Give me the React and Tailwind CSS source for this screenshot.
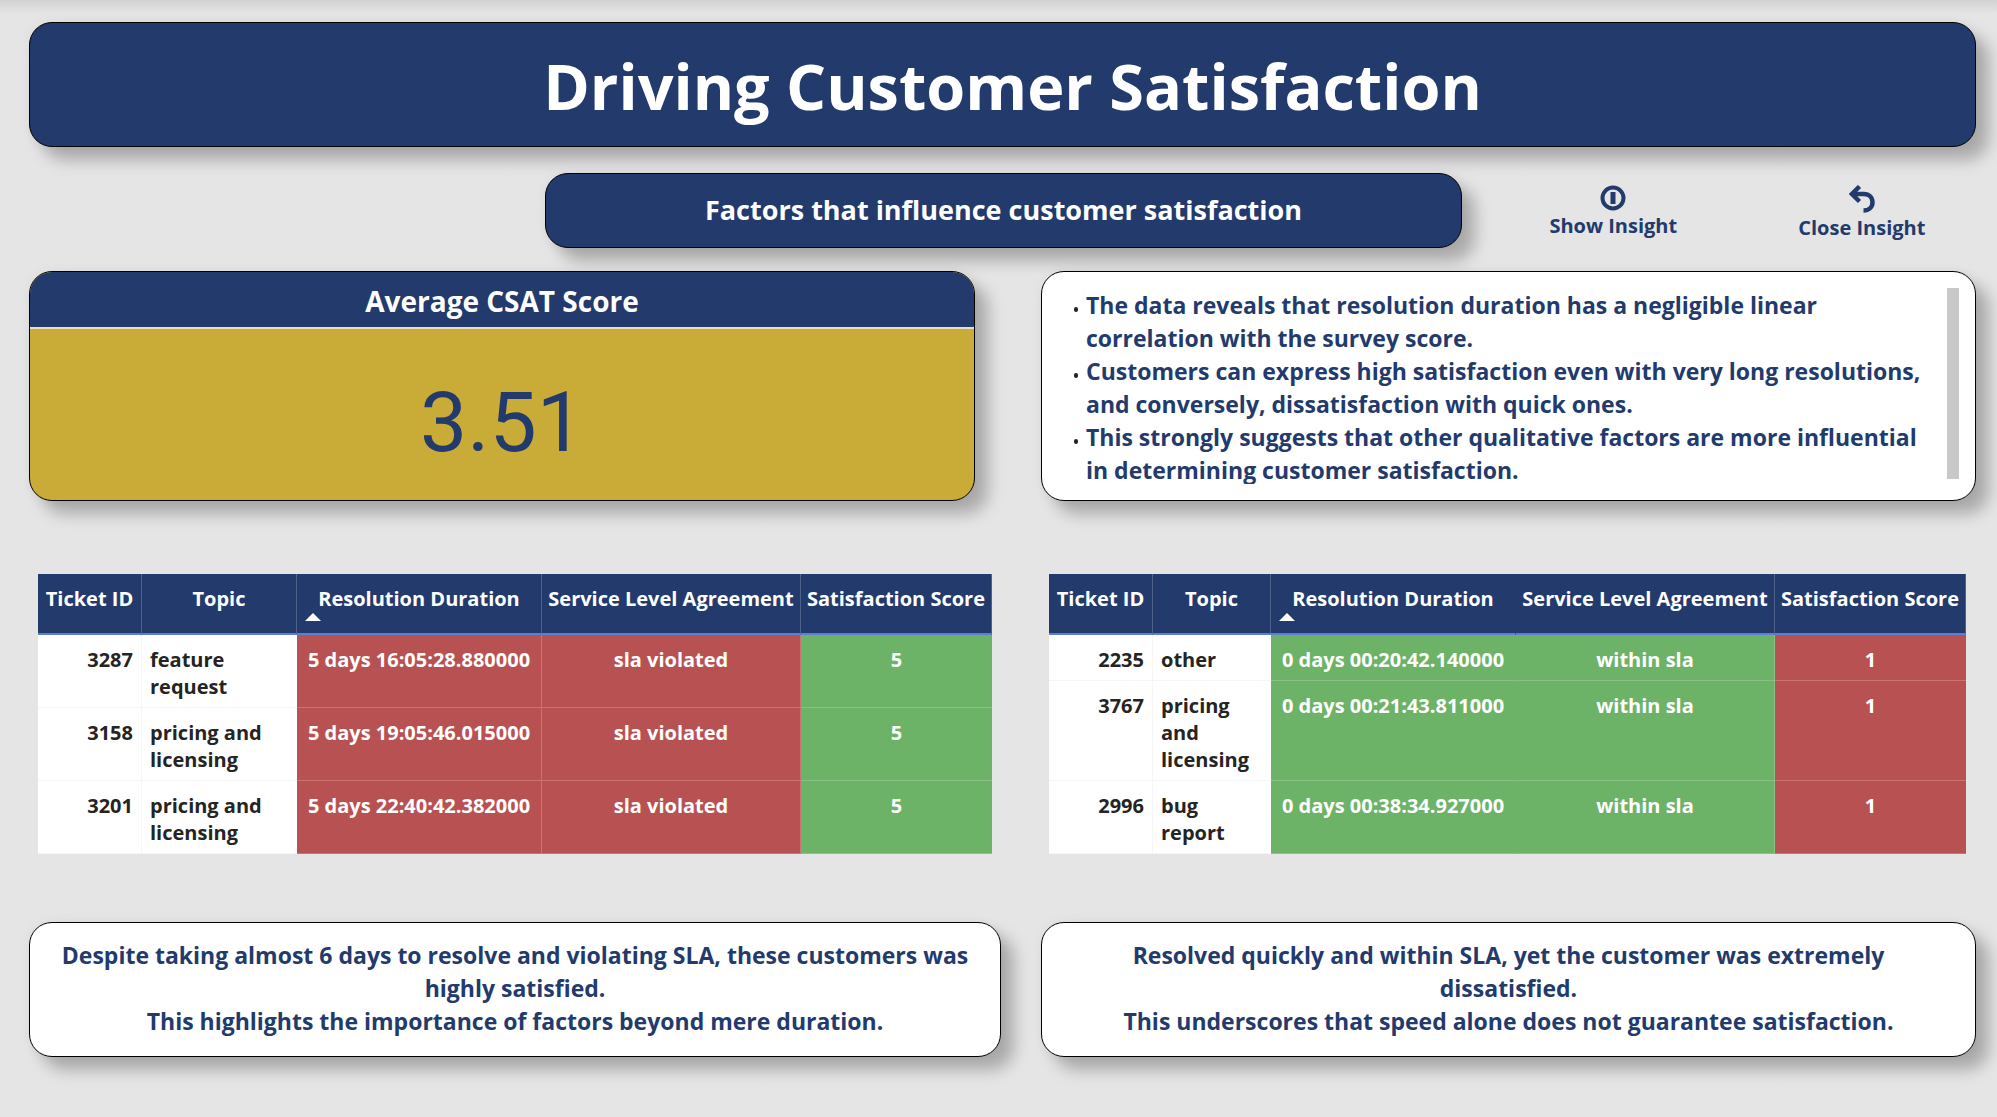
import React from "react";

const cardShadow = "shadow-[13px_13px_16px_0px_rgba(0,0,0,0.26),0_0_12px_0px_rgba(0,0,0,0.05)]";

const insights = [
  "The data reveals that resolution duration has a negligible linear correlation with the survey score.",
  "Customers can express high satisfaction even with very long resolutions, and conversely, dissatisfaction with quick ones.",
  "This strongly suggests that other qualitative factors are more influential in determining customer satisfaction.",
];

const violatedRows = [
  ["3287", "feature request", "5 days 16:05:28.880000", "sla violated", "5"],
  ["3158", "pricing and licensing", "5 days 19:05:46.015000", "sla violated", "5"],
  ["3201", "pricing and licensing", "5 days 22:40:42.382000", "sla violated", "5"],
];

const withinRows = [
  ["2235", "other", "0 days 00:20:42.140000", "within sla", "1"],
  ["3767", "pricing and licensing", "0 days 00:21:43.811000", "within sla", "1"],
  ["2996", "bug report", "0 days 00:38:34.927000", "within sla", "1"],
];

function TicketTable({ rows, topicWidth, slaColor, scoreColor, divider, label }) {
  const head = "border-r border-b-2 border-white/20 border-b-[#5b7fd6] px-1 pt-[11px] align-top font-bold whitespace-nowrap";
  const cell = "border-b px-2 pt-[11px] pb-[7px] align-top";
  return (
    <table aria-label={label} className="w-full table-fixed border-separate border-spacing-0 text-[20px] leading-[27px] font-bold">
      <colgroup>
        <col className="w-[104px]" />
        <col className={topicWidth} />
        <col className="w-[245px]" />
        <col className="w-[259px]" />
        <col />
      </colgroup>
      <thead>
        <tr className="h-[61px] bg-[#223a6c] text-white">
          <th scope="col" className={head}>Ticket ID</th>
          <th scope="col" className={head}>Topic</th>
          <th scope="col" aria-sort="ascending" className={`${head} relative ${divider}`}>
            Resolution Duration
            <svg aria-hidden="true" viewBox="0 0 16 8" className="absolute bottom-3 left-2 h-2 w-4">
              <path d="M0 8L8 0L16 8Z" fill="#fff" />
            </svg>
          </th>
          <th scope="col" className={head}>Service Level Agreement</th>
          <th scope="col" className={head}>Satisfaction Score</th>
        </tr>
      </thead>
      <tbody>
        {rows.map(([id, topic, duration, sla, score]) => (
          <tr key={id} className="text-white">
            <td className={`${cell} border-r border-[#f6f6f6] bg-white text-right text-[#252423]`}>{id}</td>
            <td className={`${cell} border-[#f6f6f6] bg-white text-[#252423]`}>{topic}</td>
            <td className={`${cell} ${slaColor} ${divider} border-r border-b-white/20 text-center whitespace-nowrap`}>{duration}</td>
            <td className={`${cell} ${slaColor} border-r border-white/20 text-center`}>{sla}</td>
            <td className={`${cell} ${scoreColor} border-white/20 text-center`}>{score}</td>
          </tr>
        ))}
      </tbody>
    </table>
  );
}

function Note({ children }) {
  return (
    <section className={`rounded-[23px] border border-black bg-white px-6 pt-[16px] pb-[18px] text-center text-[23px] leading-[33px] font-bold ${cardShadow}`}>
      {children}
    </section>
  );
}

export default function App() {
  return (
    <main className="min-h-screen bg-[#e5e5e5] bg-linear-to-b from-[#d2d2d2] to-[#e5e5e5] to-[14px] pt-[22px] pr-[21px] pb-[58px] pl-[29px] font-['Open_Sans',sans-serif] text-[#223a6c]">
      <header className={`rounded-[23px] border border-black bg-[#223a6c] pt-[22px] pb-[19px] pl-[20px] text-center ${cardShadow}`}>
        <h1 className="text-[63px] leading-[82px] font-bold text-white">Driving Customer Satisfaction</h1>
      </header>

      <div className="mt-[26px] grid grid-cols-[516fr_917fr_514fr]">
        <h2 className={`col-start-2 rounded-[23px] border border-black bg-[#223a6c] pt-[17px] pb-[18px] text-center text-[27px] leading-[38px] font-bold text-white ${cardShadow}`}>
          Factors that influence customer satisfaction
        </h2>
        <div className="grid grid-cols-[302fr_194fr] pt-3 pr-[17px] text-[20px] leading-[27px] font-bold">
          <button type="button" className="flex flex-col items-center gap-px">
            <svg aria-hidden="true" viewBox="0 0 26 26" className="h-[26px] w-[26px]" fill="none" stroke="currentColor">
              <circle cx="13" cy="13" r="10.5" strokeWidth="4" />
              <path d="M13 7V19" strokeWidth="5" />
            </svg>
            Show Insight
          </button>
          <button type="button" className="flex flex-col items-center gap-px">
            <svg aria-hidden="true" viewBox="0 0 26 28" className="h-7 w-[26px]" fill="none" stroke="currentColor" strokeWidth="4.5">
              <path d="M3 9H15C20 9 23.500 12.500 23.500 17.500C23.500 22 20 25.500 14.500 25.500" />
              <path d="M10.500 1.500L3 9L10.500 16.500" />
            </svg>
            Close Insight
          </button>
        </div>
      </div>

      <div className="mt-[23px] grid grid-cols-[946fr_935fr] gap-[66px]">
        <section className={`flex flex-col overflow-hidden rounded-[23px] border border-black bg-[#c9ab38] ${cardShadow}`}>
          <h2 className="border-b-2 border-[#e9dfc0] bg-[#223a6c] pt-[11px] pb-2 text-center text-[28px] leading-[36px] font-bold text-white">
            Average CSAT Score
          </h2>
          <p className="flex flex-1 items-center justify-center pt-4 font-['Roboto',sans-serif] text-[84px] leading-[84px]">3.51</p>
        </section>
        <section className={`flex justify-between rounded-[23px] border border-black bg-white py-4 pr-4 pl-8 ${cardShadow}`}>
          <ul className="h-[196px] flex-1 overflow-hidden pt-px pr-4 text-[23px] leading-[33px] font-bold">
            {insights.map((text) => (
              <li key={text} className="flex gap-2">
                <span aria-hidden="true" className="mt-[18px] h-[5px] w-1 shrink-0 rounded-full bg-[#252423]" />
                <span>{text}</span>
              </li>
            ))}
          </ul>
          <div aria-hidden="true" className="h-[191px] w-3 shrink-0 bg-[#c8c8c8]" />
        </section>
      </div>

      <div className="mt-[73px] grid grid-cols-[954fr_917fr] items-start gap-[57px] pr-[10px] pl-[9px]">
        <TicketTable label="Tickets with violated SLA" rows={violatedRows} topicWidth="w-[155px]" slaColor="bg-[#b85252]" scoreColor="bg-[#6db367]" divider="border-r-white/20" />
        <TicketTable label="Tickets within SLA" rows={withinRows} topicWidth="w-[118px]" slaColor="bg-[#6db367]" scoreColor="bg-[#b85252]" divider="border-r-transparent" />
      </div>

      <div className="mt-[68px] grid grid-cols-[972fr_935fr] gap-10">
        <Note>
          <p>Despite taking almost 6 days to resolve and violating SLA, these customers was highly satisfied.</p>
          <p>This highlights the importance of factors beyond mere duration.</p>
        </Note>
        <Note>
          <p>Resolved quickly and within SLA, yet the customer was extremely dissatisfied.</p>
          <p>This underscores that speed alone does not guarantee satisfaction.</p>
        </Note>
      </div>
    </main>
  );
}
